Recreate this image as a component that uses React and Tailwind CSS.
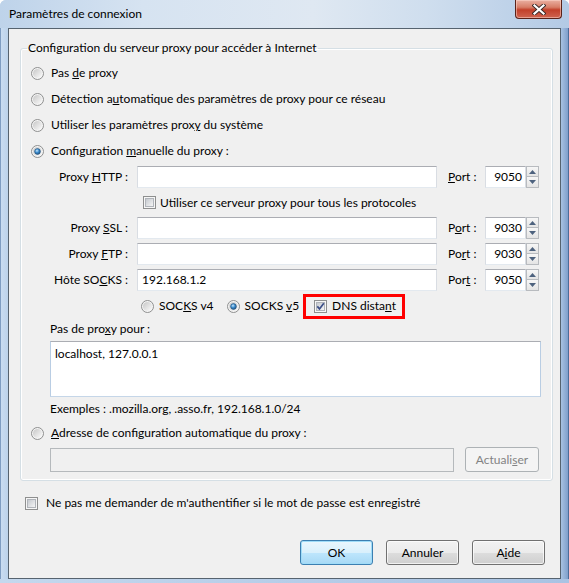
import React from 'react'
import clsx from 'clsx'

const Radio = ({ checked }) => (
  <svg width="13" height="13" viewBox="0 0 13 13" className="shrink-0">
    <defs>
      <linearGradient id="radioFace" x1="0" y1="0" x2="1" y2="1">
        <stop offset="0" stopColor="#c6c6c6" />
        <stop offset="1" stopColor="#fcfcfc" />
      </linearGradient>
      <radialGradient id="radioDot" cx="0.4" cy="0.35" r="0.75">
        <stop offset="0" stopColor="#c4e6fc" />
        <stop offset="0.45" stopColor="#3d8ccd" />
        <stop offset="1" stopColor="#1b4873" />
      </radialGradient>
    </defs>
    <circle cx="6.5" cy="6.5" r="6" fill="#f5f5f5" stroke="#8e8f8f" />
    <circle cx="6.5" cy="6.5" r="4.6" fill="url(#radioFace)" />
    {checked && <circle cx="6.5" cy="6.5" r="2.9" fill="url(#radioDot)" stroke="#20507c" strokeWidth="0.6" />}
  </svg>
)

const Checkbox = ({ checked }) => (
  <svg width="13" height="13" viewBox="0 0 13 13" className="shrink-0">
    <defs>
      <linearGradient id="checkFace" x1="0" y1="0" x2="1" y2="1">
        <stop offset="0" stopColor="#c2c6cc" />
        <stop offset="1" stopColor="#f8f8f8" />
      </linearGradient>
    </defs>
    <rect x="0.5" y="0.5" width="12" height="12" fill="#f6f6f6" stroke="#8e8f8f" />
    <rect x="2.5" y="2.5" width="8" height="8" fill="url(#checkFace)" stroke="#b0b4ba" />
    {checked && <path d="M3.3 6.4 L5.5 8.9 L9.8 3.3" fill="none" stroke="#3a4d86" strokeWidth="1.7" />}
  </svg>
)

const Spinner = () => (
  <div className="flex h-[22px] w-[13px] flex-col">
    <div className="flex h-[11px] items-center justify-center border border-[#b8bbbf] bg-[linear-gradient(to_bottom,#f7f7f7,#e4e4e4)]">
      <svg width="7" height="4" viewBox="0 0 7 4">
        <path d="M0 4 L3.5 0 L7 4 Z" fill="#4d627e" />
      </svg>
    </div>
    <div className="flex h-[11px] items-center justify-center border border-t-0 border-[#b8bbbf] bg-[linear-gradient(to_bottom,#f7f7f7,#e4e4e4)]">
      <svg width="7" height="4" viewBox="0 0 7 4">
        <path d="M0 0 L3.5 4 L7 0 Z" fill="#4d627e" />
      </svg>
    </div>
  </div>
)

const Field = ({ value, className }) => (
  <div
    className={clsx(
      'flex h-[22px] items-center border border-[#abadb3] border-x-[#d9dde3] border-b-[#e3e9ef] bg-white px-[4px]',
      className
    )}
  >
    {value}
  </div>
)

const HostRow = ({ label, portLabel, port, value }) => (
  <div className="flex h-[26px] items-center">
    <div className="w-[97px] text-right">{label}</div>
    <Field value={value} className="ml-[9px] w-[300px]" />
    <div className="ml-[11px] w-[37px]">{portLabel}</div>
    <Field value={port} className="w-[41px] justify-end pr-[3px]" />
    <Spinner />
  </div>
)

const RadioRow = ({ checked, children }) => (
  <div className="flex h-[26px] items-center gap-[7px]">
    <Radio checked={checked} />
    <span>{children}</span>
  </div>
)

const btnBase = 'flex h-[25px] w-[73px] items-center justify-center rounded-[3px] border'
const btnNormal =
  'border-[#707070] bg-[linear-gradient(to_bottom,#f2f2f2,#ebebeb_50%,#dddddd_51%,#cfcfcf)] shadow-[inset_0_0_0_1px_rgba(255,255,255,0.7)]'

const App = () => {
  return (
    <div className="flex h-[583px] w-[569px] flex-col overflow-hidden rounded-t-[6px] bg-[#bcd2ea] font-['Lato','Liberation_Sans',sans-serif] text-[12px] leading-[16px] text-black">
      {/* title bar */}
      <div className="flex h-[28px] shrink-0 items-start justify-between bg-[linear-gradient(to_right,#bed3ea,#d6e3f1_25%,#dfe8f2_55%,#cfdeee_75%,#b3cae5)]">
        <div className="flex h-[28px] items-center pl-[9px]">Paramètres de connexion</div>
        <div className="mr-[7px] flex h-[19px] w-[47px] items-center justify-center rounded-b-[4px] border border-t-0 border-[#5a2219] bg-[linear-gradient(to_bottom,#eab0a2,#d77e68_40%,#c2402a_55%,#cf6450)] shadow-[inset_0_0_0_1px_rgba(255,220,210,0.5)]">
          <svg width="14" height="11" viewBox="0 0 14 11">
            <path d="M2.5 1.5 L11.5 9.5 M11.5 1.5 L2.5 9.5" stroke="#3b2a28" strokeWidth="4" strokeLinecap="square" />
            <path d="M2.5 1.5 L11.5 9.5 M11.5 1.5 L2.5 9.5" stroke="#ffffff" strokeWidth="2.2" strokeLinecap="square" />
          </svg>
        </div>
      </div>

      <div className="flex flex-1">
        <div className="w-[8px] border-l border-[#7f9dc2] bg-[linear-gradient(to_right,#c9dcf1,#bcd2ea)]" />

        {/* client area */}
        <div className="flex w-[553px] flex-col border border-[#56636f] bg-[#f0f0f0]">
          <fieldset className="mt-[11px] ml-[11px] mr-[7px] rounded-[3px] border border-[#d5dfe5] pb-[8px] shadow-[inset_0_0_0_1px_#ffffff]">
            <legend className="ml-[6px] px-[1px]">Configuration du serveur proxy pour accéder à Internet</legend>
            <div className="pt-[4px] pl-[10px]">
              <RadioRow>
                Pas <u>d</u>e proxy
              </RadioRow>
              <RadioRow>
                Détection a<u>u</u>tomatique des paramètres de proxy pour ce réseau
              </RadioRow>
              <RadioRow>
                Utiliser les paramètres prox<u>y</u> du système
              </RadioRow>
              <RadioRow checked>
                Configuration <u>m</u>anuelle du proxy :
              </RadioRow>

              <HostRow
                label={<span>Proxy <u>H</u>TTP :</span>}
                portLabel={<span><u>P</u>ort :</span>}
                port="9050"
              />

              <div className="flex h-[25px] items-center gap-[4px] pl-[112px]">
                <Checkbox />
                <span>
                  Ut<u>i</u>liser ce serveur proxy pour tous les protocoles
                </span>
              </div>

              <HostRow
                label={<span>Proxy <u>S</u>SL :</span>}
                portLabel={<span>P<u>o</u>rt :</span>}
                port="9030"
              />
              <HostRow
                label={<span>Proxy <u>F</u>TP :</span>}
                portLabel={<span>Po<u>r</u>t :</span>}
                port="9030"
              />
              <HostRow
                label={<span>Hôte SO<u>C</u>KS :</span>}
                portLabel={<span>Por<u>t</u> :</span>}
                port="9050"
                value="192.168.1.2"
              />

              <div className="flex h-[26px] items-center whitespace-nowrap pl-[110px]">
                <Radio />
                <span className="ml-[5px]">
                  SOC<u>K</u>S v4
                </span>
                <span className="ml-[13px] flex">
                  <Radio checked />
                </span>
                <span className="ml-[5px]">
                  SOCKS <u>v</u>5
                </span>
                <div className="ml-[4px] flex h-[25px] items-center gap-[5px] border-[3px] border-[#ff0000] pl-[8px] pr-[6px]">
                  <Checkbox checked />
                  <span>
                    DNS dista<u>n</u>t
                  </span>
                </div>
              </div>

              <div className="flex h-[20px] items-center pl-[19px]">
                <span>
                  Pas de pro<u>x</u>y pour :
                </span>
              </div>
              <div className="mt-[2px] ml-[19px] h-[56px] w-[491px] border border-[#abadb3] border-x-[#b9cde3] border-b-[#c5d6e8] bg-white px-[4px] pt-[4px]">
                localhost, 127.0.0.1
              </div>
              <div className="flex h-[23px] items-center pl-[19px]">
                Exemples : .mozilla.org, .asso.fr, 192.168.1.0/24
              </div>
              <RadioRow>
                <u>A</u>dresse de configuration automatique du proxy :
              </RadioRow>
              <div className="mt-[1px] flex h-[25px] items-center pl-[19px]">
                <div className="h-[24px] w-[404px] border border-[#b5b9bc] bg-[#f0f0f0]" />
                <div className={clsx(btnBase, 'ml-[11px] w-[74px] border-[#adb2b5] bg-[#f4f4f4] text-[#838383]')}>
                  <span>
                    Actuali<u>s</u>er
                  </span>
                </div>
              </div>
            </div>
          </fieldset>

          <div className="mt-[9px] flex h-[26px] items-center gap-[8px] pl-[16px]">
            <Checkbox />
            <span>
              Ne pas me demander de m'authentifier si le mot de passe est enre<u>g</u>istré
            </span>
          </div>

          <div className="mt-[24px] flex justify-end gap-[13px] pr-[15px]">
            <div className="flex h-[25px] w-[73px] items-center justify-center rounded-[3px] border border-[#3c7fb1] bg-[linear-gradient(to_bottom,#eaf6fd,#d9f0fc_50%,#bee6fd_51%,#a7d9f5)] shadow-[inset_0_0_0_1px_#9fdcf8]">
              OK
            </div>
            <div className={clsx(btnBase, btnNormal)}>Annuler</div>
            <div className={clsx(btnBase, btnNormal)}>
              <span>
                A<u>i</u>de
              </span>
            </div>
          </div>
        </div>

        <div className="w-[8px] border-r border-[#4d6d99] bg-[linear-gradient(to_right,#a8c2e2,#7f9fcb)]" />
      </div>

      <div className="h-[4px] shrink-0 bg-[linear-gradient(to_right,#c4d8ee,#a9c3e3)]" />
    </div>
  )
}

export default App
